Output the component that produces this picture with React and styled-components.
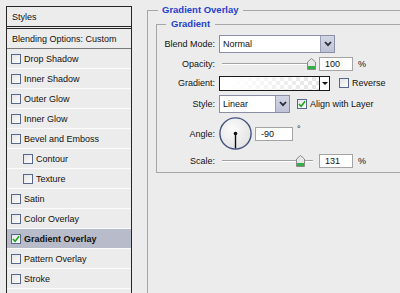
import React from 'react';
import styled, { createGlobalStyle } from 'styled-components';

const GlobalStyle = createGlobalStyle`
    html, body {
        margin: 0;
        padding: 0;
        background: #ececec;
    }
    body {
        font-family: "Liberation Sans", Arial, sans-serif;
        font-size: 9px;
        color: #111;
    }
`

const Screen = styled.div`
    width: 400px;
    height: 293px;
    overflow: hidden;
    display: flex;
    align-items: flex-start;
    background: #ececec;
`

const StylesPanel = styled.ul`
    margin: 6px 0 0 6px;
    padding: 0;
    width: 126px;
    height: 300px;
    box-sizing: border-box;
    border: 1px solid #262626;
    border-bottom: none;
    flex-shrink: 0;
`

const PanelHeader = styled.li`
    list-style: none;
    height: 19px;
    padding-left: 5px;
    display: flex;
    align-items: center;
    border-bottom: 3px double #262626;
`

const BlendingRow = styled.li`
    list-style: none;
    height: 19px;
    padding-left: 5px;
    display: flex;
    align-items: center;
    border-bottom: 1px solid #7a7a7a;
`

const StyleRow = styled.li`
    list-style: none;
    height: 19px;
    display: flex;
    align-items: center;
    gap: 3px;
    padding-left: ${p => (p.$indent ? 16 : 4)}px;
    border-bottom: 1px solid #fbfbfb;
    background: ${p => (p.$active ? '#b8bcca' : 'transparent')};
    font-weight: ${p => (p.$active ? 'bold' : 'normal')};
`

const Box = styled.span`
    width: 10px;
    height: 10px;
    box-sizing: border-box;
    border: 1px solid #55678c;
    background: linear-gradient(135deg, #e4e4e4, #fdfdfd);
    display: inline-flex;
    align-items: center;
    justify-content: center;
    flex-shrink: 0;
`

const Check = () => (
    <svg width="9" height="8" viewBox="0 0 9 8">
        <path d="M1 4 L3.5 6.5 L8 1" fill="none" stroke="#1da51d" strokeWidth="1.8" />
    </svg>
)

const CheckBox = ({ checked }) => (
    <Box>{checked && <Check />}</Box>
)

const Options = styled.div`
    margin-left: 15px;
    flex-shrink: 0;
`

const Group = styled.fieldset`
    margin: ${p => (p.$outer ? '4px 0 0 0' : '2px 0 0 0')};
    padding: ${p => (p.$outer ? '0 0 0 8px' : '0')};
    width: ${p => (p.$outer ? '300px' : '290px')};
    height: ${p => (p.$outer ? '320px' : 'auto')};
    min-width: 0;
    box-sizing: border-box;
    border: 1px solid #a6a6a6;
    border-right: none;
    ${p => p.$outer && 'border-bottom: none;'}
`

const Legend = styled.legend`
    margin-left: ${p => (p.$outer ? 2 : 9)}px;
    padding: 0 ${p => (p.$outer ? 4 : 5)}px;
    line-height: 12px;
    font-size: 9.5px;
    font-weight: bold;
    color: #1f3fcf;
`

const Fields = styled.div`
    margin-top: 4px;
    padding-bottom: 3px;
    display: grid;
    grid-template-columns: 58px auto;
    grid-template-rows: 20px 19px 20px 22px 37px 17px;
    column-gap: 4px;
`

const Label = styled.label`
    justify-self: end;
    align-self: center;
    white-space: nowrap;
`

const Control = styled.div`
    display: flex;
    align-items: center;
    white-space: nowrap;
`

const SelectBox = styled.div`
    width: ${p => p.$width}px;
    height: 18px;
    box-sizing: border-box;
    border: 1px solid #8c8ea4;
    background: #fff;
    display: flex;
    align-items: center;
    justify-content: space-between;
    padding-left: 3px;
`

const SelectButton = styled.span`
    width: 14px;
    height: 16px;
    box-sizing: border-box;
    background: linear-gradient(#d3d6e4, #bfc3d6);
    border-left: 1px solid #9a9db4;
    display: flex;
    align-items: center;
    justify-content: center;
`

const Chevron = () => (
    <svg width="8" height="6" viewBox="0 0 8 6">
        <path d="M1 1 L4 4.2 L7 1" fill="none" stroke="#2b2b3a" strokeWidth="1.8" />
    </svg>
)

const Select = ({ width, value }) => (
    <SelectBox $width={width}>
        {value}
        <SelectButton><Chevron /></SelectButton>
    </SelectBox>
)

const SliderTrack = styled.div`
    position: relative;
    width: 97px;
    height: 13px;
    margin-right: 3px;

    &::before {
        content: '';
        position: absolute;
        left: 3px;
        right: 3px;
        top: 6px;
        height: 1px;
        background: #a2a2a2;
        border-bottom: 1px solid #fff;
    }
`

const Thumb = styled.svg`
    position: absolute;
    top: 1px;
`

const Slider = ({ value, max }) => {
    const left = 3 + Math.round((value / max) * 85)
    return (
        <SliderTrack>
            <Thumb width="9" height="12" viewBox="0 0 9 12" style={{ left }}>
                <path d="M0.5 4 L4.5 0.5 L8.5 4 L8.5 11.5 L0.5 11.5 Z" fill="#e6e6e6" stroke="#8a8a8a" />
                <rect x="1" y="8" width="7" height="3" fill="#33b043" />
            </Thumb>
        </SliderTrack>
    )
}

const NumberBox = styled.div`
    width: ${p => p.$width}px;
    height: 14px;
    box-sizing: border-box;
    border: 1px solid #a4a4a4;
    background: #fff;
    padding-left: 5px;
    display: flex;
    align-items: center;
`

const Unit = styled.span`
    margin-left: ${p => p.$gap}px;
    align-self: ${p => (p.$raised ? 'flex-start' : 'center')};
    margin-top: ${p => (p.$raised ? 9 : 0)}px;
`

const GradientSwatch = styled.div`
    width: 111px;
    height: 15px;
    box-sizing: border-box;
    border: 1px solid #1a1a1a;
    display: flex;
    margin-right: 9px;
`

const GradientFill = styled.div`
    flex: 1;
    background:
        linear-gradient(to right, #fff 10%, rgba(255, 255, 255, 0.35)),
        repeating-conic-gradient(#d6d6d6 0 25%, #fff 0 50%) 0 0 / 8px 8px;
`

const SwatchArrow = styled.span`
    width: 9px;
    border-left: 1px solid #1a1a1a;
    background: #fff;
    display: flex;
    align-items: center;
    justify-content: center;

    &::after {
        content: '';
        border-left: 3px solid transparent;
        border-right: 3px solid transparent;
        border-top: 3px solid #111;
    }
`

const CheckLabel = styled.span`
    display: inline-flex;
    align-items: center;
    gap: 3px;
    margin-left: ${p => p.$gap || 0}px;
`

const AngleDial = ({ angle }) => {
    const r = (angle * Math.PI) / 180
    const x2 = 16.5 + Math.cos(r) * 15
    const y2 = 16.5 - Math.sin(r) * 15
    return (
        <svg width="33" height="33" viewBox="0 0 33 33" style={{ marginRight: 3 }}>
            <defs>
                <radialGradient id="dial" cx="0.4" cy="0.35" r="0.7">
                    <stop offset="0" stopColor="#fbfbfb" />
                    <stop offset="1" stopColor="#e2e2e2" />
                </radialGradient>
            </defs>
            <circle cx="16.5" cy="16.5" r="15.6" fill="url(#dial)" stroke="#45547e" strokeWidth="1.4" />
            <line x1="16.5" y1="16.5" x2={x2} y2={y2} stroke="#111" strokeWidth="1.4" />
            <circle cx="16.5" cy="16.5" r="1.8" fill="#111" />
        </svg>
    )
}

const layers = [
    { name: 'Drop Shadow' },
    { name: 'Inner Shadow' },
    { name: 'Outer Glow' },
    { name: 'Inner Glow' },
    { name: 'Bevel and Emboss' },
    { name: 'Contour', indent: true },
    { name: 'Texture', indent: true },
    { name: 'Satin' },
    { name: 'Color Overlay' },
    { name: 'Gradient Overlay', active: true },
    { name: 'Pattern Overlay' },
    { name: 'Stroke' },
    { name: '', empty: true },
]

export default function App() {
    return (
        <Screen>
            <GlobalStyle />
            <StylesPanel>
                <PanelHeader>Styles</PanelHeader>
                <BlendingRow>Blending Options: Custom</BlendingRow>
                {layers.map((l, i) => (
                    <StyleRow key={i} $indent={l.indent} $active={l.active}>
                        {!l.empty && <CheckBox checked={l.active} />}
                        {l.name}
                    </StyleRow>
                ))}
            </StylesPanel>

            <Options>
                <Group $outer>
                    <Legend $outer>Gradient Overlay</Legend>
                    <Group>
                        <Legend>Gradient</Legend>
                        <Fields>
                            <Label>Blend Mode:</Label>
                            <Control><Select width={116} value="Normal" /></Control>

                            <Label>Opacity:</Label>
                            <Control>
                                <Slider value={100} max={100} />
                                <NumberBox $width={34}>100</NumberBox>
                                <Unit $gap={5}>%</Unit>
                            </Control>

                            <Label>Gradient:</Label>
                            <Control>
                                <GradientSwatch>
                                    <GradientFill />
                                    <SwatchArrow />
                                </GradientSwatch>
                                <CheckLabel><CheckBox />Reverse</CheckLabel>
                            </Control>

                            <Label>Style:</Label>
                            <Control>
                                <Select width={71} value="Linear" />
                                <CheckLabel $gap={7}><CheckBox checked />Align with Layer</CheckLabel>
                            </Control>

                            <Label>Angle:</Label>
                            <Control>
                                <AngleDial angle={-90} />
                                <NumberBox $width={38}>-90</NumberBox>
                                <Unit $gap={4} $raised>°</Unit>
                            </Control>

                            <Label>Scale:</Label>
                            <Control>
                                <Slider value={80} max={92} />
                                <NumberBox $width={34}>131</NumberBox>
                                <Unit $gap={5}>%</Unit>
                            </Control>
                        </Fields>
                    </Group>
                </Group>
            </Options>
        </Screen>
    )
}
